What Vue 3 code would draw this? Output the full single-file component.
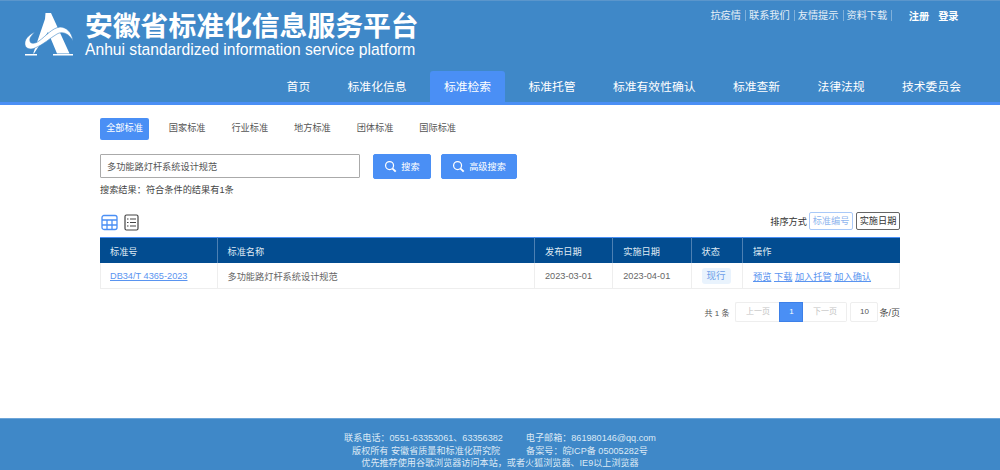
<script setup>
const tabs = ['全部标准', '国家标准', '行业标准', '地方标准', '团体标准', '国际标准']
const nav = ['首页', '标准化信息', '标准检索', '标准托管', '标准有效性确认', '标准查新', '法律法规', '技术委员会']
const links = ['抗疫情', '联系我们', '友情提示', '资料下载']
const actions = ['预览', '下载', '加入托管', '加入确认']
</script>

<template>
  <div class="page">
    <header class="header">
      <div class="top">
        <div class="brand">
          <svg class="logo" viewBox="10 7 50 45" aria-hidden="true">
            <path d="M30.500 8h5.500l18.500 40.500H42L33 27 19 48.500h-.8L30 14z" fill="#fff" />
            <path d="M20 27C13 30 9 35 10 40c1 4 6 5 10 3 8-3 15-10 22-14 5-3 12-1 16 7-1-9-7-14-13-14-8 1-14 9-21 14-4 3-9 3-9 0-1-3 2-6 5-9z" fill="#fff" stroke="#3f88c8" stroke-width=".6" />
            <path d="M10 49h12v1.500H10zM38 49h20v1.500H38z" fill="#fff" />
          </svg>
          <div class="brand-text">
            <div class="brand-cn">安徽省标准化信息服务平台</div>
            <div class="brand-en">Anhui standardized information service platform</div>
          </div>
        </div>
        <div class="top-links">
          <span v-for="l in links" :key="l" class="top-link">{{ l }}</span>
          <b class="auth first">注册</b>
          <b class="auth">登录</b>
        </div>
      </div>
      <nav class="nav">
        <a v-for="n in nav" :key="n" class="nav-item" :class="{ active: n === '标准检索' }">{{ n }}</a>
      </nav>
    </header>

    <main class="main">
      <div class="tabs">
        <span v-for="(t, i) in tabs" :key="t" class="tab" :class="{ on: i === 0 }">{{ t }}</span>
      </div>

      <div class="search">
        <div class="input">多功能路灯杆系统设计规范</div>
        <button class="btn">
          <svg class="mag" viewBox="0 0 14 14"><circle cx="6" cy="6" r="4.300" /><path class="handle" d="M9.200 9.200l3.400 3.400" /></svg>
          <span>搜索</span>
        </button>
        <button class="btn wide">
          <svg class="mag" viewBox="0 0 14 14"><circle cx="6" cy="6" r="4.300" /><path class="handle" d="M9.200 9.200l3.400 3.400" /></svg>
          <span>高级搜索</span>
        </button>
      </div>
      <div class="result">搜索结果：符合条件的结果有1条</div>

      <div class="toolbar">
        <div class="views">
          <svg class="v1" viewBox="0 0 17 17"><rect x="1" y="1.500" width="15" height="14" rx="2" /><path d="M1 6h15M1 11h15M6 6v9.500M11 6v9.500" /></svg>
          <svg class="v2" viewBox="0 0 15 17"><rect x="1" y="1" width="13" height="15" rx="1.500" /><path d="M6 5h6M6 8.500h6M6 12h6M3 5h1.500M3 8.500h1.500M3 12h1.500" /></svg>
        </div>
        <div class="sort">
          <span class="sort-label">排序方式</span>
          <span class="chip blue">标准编号</span>
          <span class="chip dark">实施日期</span>
        </div>
      </div>

      <table class="table">
        <colgroup>
          <col class="c1" /><col class="c2" /><col class="c3" /><col class="c3" /><col class="c5" /><col />
        </colgroup>
        <thead>
          <tr><th>标准号</th><th>标准名称</th><th>发布日期</th><th>实施日期</th><th>状态</th><th>操作</th></tr>
        </thead>
        <tbody>
          <tr>
            <td><a class="link">DB34/T 4365-2023</a></td>
            <td>多功能路灯杆系统设计规范</td>
            <td>2023-03-01</td>
            <td>2023-04-01</td>
            <td><span class="status">现行</span></td>
            <td class="ops"><a v-for="a in actions" :key="a" class="link">{{ a }}</a></td>
          </tr>
        </tbody>
      </table>

      <div class="pager">
        <span class="total">共 1 条</span>
        <div class="pages">
          <span class="pg prev">上一页</span>
          <span class="pg cur">1</span>
          <span class="pg next">下一页</span>
        </div>
        <span class="size">10</span>
        <span class="per">条/页</span>
      </div>
    </main>

    <footer class="footer">
      <div class="line"><span class="f1">联系电话：0551-63353061、63356382</span><span>电子邮箱：861980146@qq.com</span></div>
      <div class="line"><span class="f2">版权所有 安徽省质量和标准化研究院</span><span>备案号：皖ICP备 05005282号</span></div>
      <div class="line">优先推荐使用谷歌浏览器访问本站，或者火狐浏览器、IE9以上浏览器</div>
    </footer>
  </div>
</template>

<style>
html, body { margin: 0; background: #fff; }
</style>

<style scoped>
.page {
  width: 1000px;
  height: 470px;
  display: flex;
  flex-direction: column;
  overflow: hidden;
  font-family: "Liberation Sans", "Noto Sans CJK SC", sans-serif;
  color: #444;
}
.header {
  height: 105px;
  box-sizing: border-box;
  background: #3f88c8;
  border-top: 1px solid #5b96cc;
  border-bottom: 3px solid #4a8ff5;
  display: flex;
  flex-direction: column;
}
.top { display: flex; justify-content: space-between; height: 70px; }
.brand { display: flex; padding: 12px 0 0 25px; gap: 10px; align-items: flex-start; }
.logo { width: 50px; height: 45px; margin-top: -1px; }
.brand-text { color: #fff; }
.brand-cn { font-size: 27.800px; line-height: 28px; font-weight: 700; white-space: nowrap; }
.brand-en { font-size: 15.650px; line-height: 18px; white-space: nowrap; }
.top-links { display: flex; align-items: center; height: 28px; padding: 0 41.500px 0 0; font-size: 10.200px; color: #e4eef7; }
.top-link { padding: 0 4px 0 3px; border-right: 1px solid #7fb0da; line-height: 11px; }
.top-link:first-child { padding-left: 0; }
.auth { color: #fff; font-size: 10.200px; margin-left: 9px; }
.auth.first { margin-left: 16.500px; }
.nav { display: flex; justify-content: flex-end; gap: 9.350px; padding-right: 25px; height: 31px; }
.nav-item {
  color: #fff;
  font-size: 11.800px;
  height: 31px;
  line-height: 33px;
  padding: 0 14px;
  white-space: nowrap;
}
.nav-item.active { background: #4a8ff5; border-radius: 3px 3px 0 0; }
.main { flex: 1; box-sizing: border-box; width: 800px; margin: 0 auto; padding-top: 13px; font-size: 9.200px; }
.tabs { display: flex; height: 22px; align-items: center; }
.tab { padding: 0 6.200px; margin-right: 13.500px; height: 22px; line-height: 21px; white-space: nowrap; color: #555; }
.tab.on { background: #4a8ff5; color: #fff; border-radius: 2px; }
.search { display: flex; margin-top: 14px; align-items: flex-start; }
.input {
  box-sizing: border-box;
  width: 260px;
  height: 24px;
  border: 1px solid #aaa;
  border-radius: 1px;
  line-height: 24px;
  padding-left: 6px;
  font-size: 9.200px;
  color: #555;
}
.btn {
  width: 58px;
  height: 25px;
  margin-left: 13px;
  padding: 0 0 1px;
  border: 1px solid #4a8ff5;
  border-radius: 2px;
  background: #4a8ff5;
  color: #fff;
  font: inherit;
  font-size: 9.200px;
  display: flex;
  align-items: center;
  justify-content: center;
  gap: 4px;
}
.btn.wide { width: 76px; margin-left: 10px; }
.mag { width: 13px; height: 13px; fill: none; stroke: #fff; stroke-width: 1.300; }
.handle { stroke-width: 2; }
.result { margin-top: 5px; font-size: 9.200px; line-height: 12px; }
.toolbar { display: flex; justify-content: space-between; align-items: flex-end; height: 22px; margin-top: 13px; }
.views { display: flex; gap: 6px; align-items: center; padding-left: 1px; }
.v1 { width: 17px; height: 17px; fill: none; stroke: #4a8ff5; stroke-width: 1.300; }
.v2 { width: 15px; height: 17px; fill: none; stroke: #444; stroke-width: 1.200; }
.sort { display: flex; align-items: center; gap: 3px; margin-bottom: 1px; }
.sort-label { color: #333; font-size: 9.200px; margin-right: -1px; }
.chip { box-sizing: border-box; width: 44px; height: 18px; line-height: 16px; text-align: center; border-radius: 2px; font-size: 9.200px; }
.chip.blue { border: 1px solid #a9c9f8; color: #8fb5ee; }
.chip.dark { border: 1px solid #666; color: #333; }
.table {
  width: 800px;
  margin-top: 6px;
  table-layout: fixed;
  border-collapse: separate;
  border-spacing: 0;
  font-size: 9.200px;
}
.c1 { width: 117.500px; }
.c2 { width: 317.500px; }
.c3 { width: 78.250px; }
.c5 { width: 51.500px; }
th {
  background: #024c90;
  color: #dfe9f3;
  font-weight: 400;
  text-align: left;
  height: 26px;
  padding: 0 0 0 10px;
  border-top: 1px solid #4a8ff5;
  border-right: 1px solid #4d80b3;
  box-sizing: border-box;
}
th:last-child { border-right: 0; }
td {
  height: 26px;
  box-sizing: border-box;
  padding: 0 0 0 10px;
  border-bottom: 1px solid #eee;
  border-right: 1px solid #eee;
  color: #666;
  white-space: nowrap;
}
td:first-child { border-left: 1px solid #eee; padding-left: 9px; }
.link { color: #5a94f0; text-decoration: underline; }
.ops .link { margin-right: 2.600px; }
.status {
  display: inline-block;
  padding: 0 5px;
  line-height: 16px;
  background: #e9f3fd;
  color: #6a9de8;
  border-radius: 3px;
  font-size: 9.500px;
}
.pager { display: flex; justify-content: flex-end; align-items: center; margin-top: 13px; height: 20px; font-size: 8px; color: #555; }
.total { margin-right: 6px; }
.pages { display: flex; }
.pg { box-sizing: border-box; height: 20px; line-height: 18px; text-align: center; border: 1px solid #eee; color: #c4c4c4; }
.prev, .next { width: 44px; }
.prev { border-radius: 2px 0 0 2px; border-right: 0; }
.next { border-radius: 0 2px 2px 0; border-left: 0; }
.cur { width: 24px; background: #4a8ff5; border-color: #3d80e8; color: #fff; }
.size { box-sizing: border-box; width: 28px; height: 20px; line-height: 18px; margin-left: 3px; text-align: center; border: 1px solid #eee; border-radius: 2px; }
.per { margin-left: 1px; font-size: 9px; color: #444; }
.footer {
  height: 52px;
  box-sizing: border-box;
  background: #3f88c8;
  border-top: 1px solid #6da5d8;
  padding-top: 13px;
  color: #dce9f5;
  font-size: 9.100px;
  line-height: 12.500px;
  text-align: center;
  white-space: nowrap;
}
.f1 { margin-right: 23px; }
.f2 { margin-right: 26px; }
</style>
